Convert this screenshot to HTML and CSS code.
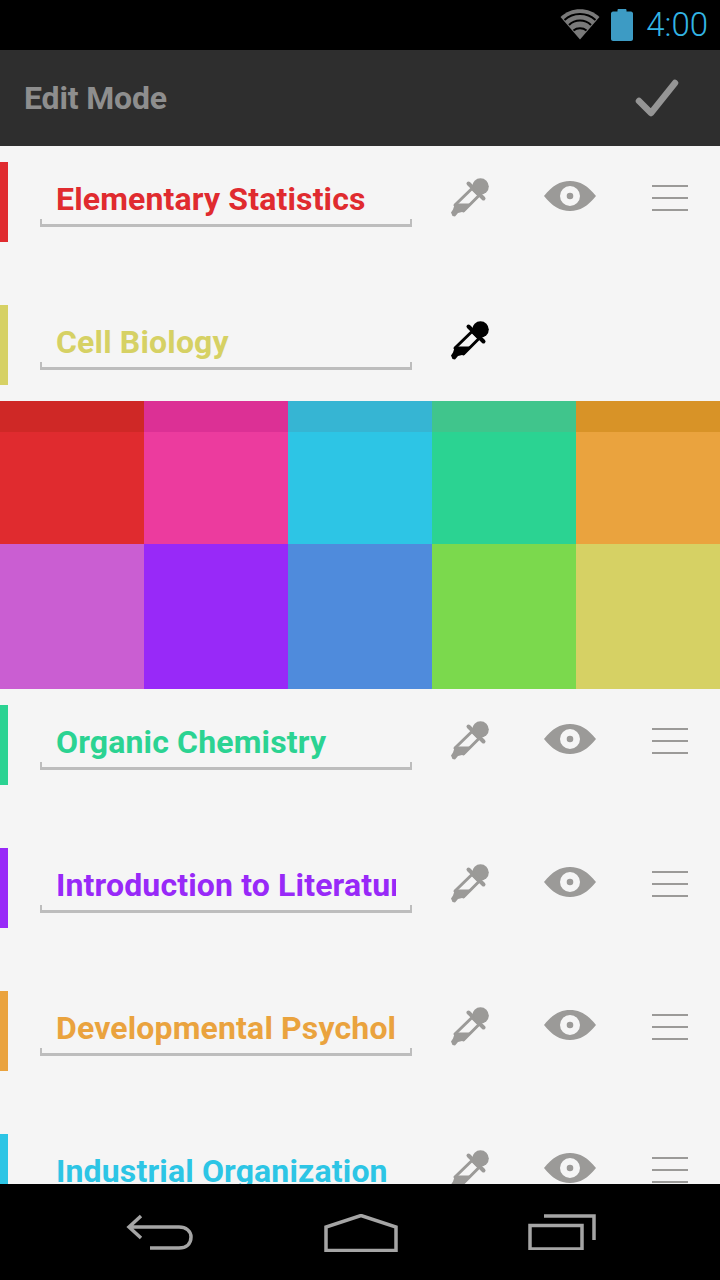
FILE: index.html
```html
<!DOCTYPE html>
<html lang="en">
<head>
<meta charset="utf-8">
<title>Edit Mode</title>
<link rel="stylesheet" href="styles.css">
</head>
<body>
<svg class="defs" width="0" height="0" aria-hidden="true">
  <symbol id="dropper" viewBox="0 0 40 40">
    <circle cx="30.500" cy="8.500" r="8.300" fill="currentColor"/>
    <path d="M18.500 5.500 L33.500 20.500" stroke="currentColor" stroke-width="4" stroke-linecap="round" fill="none"/>
    <path d="M22 10.500 L29 17.500 L13.500 33 L5 27 Z" fill="none" stroke="currentColor" stroke-width="3" stroke-linejoin="round"/>
    <path d="M5 25.500 L21 25.500 L14 33.500 L8 35 L5 38.500 L2.500 38 L1 34.500 L3 31.500 Z" fill="currentColor"/>
  </symbol>
  <symbol id="eye" viewBox="0 0 54 32">
    <path fill-rule="evenodd" fill="currentColor" d="M1 16 C9 6 17 1 27 1 C37 1 45 6 53 16 C45 26 37 31 27 31 C17 31 9 26 1 16 Z M27 6 A10 10 0 1 0 27 26 A10 10 0 1 0 27 6 Z M27 12.700 A3.300 3.300 0 1 1 27 19.300 A3.300 3.300 0 1 1 27 12.700 Z"/>
  </symbol>
  <symbol id="handle" viewBox="0 0 36 26">
    <path d="M0 1 H36 M0 13 H36 M0 25 H36" stroke="currentColor" stroke-width="2" fill="none"/>
  </symbol>
</svg>
<div class="screen">
  <header class="status">
    <svg class="wifi" viewBox="0 0 40 32"><path d="M0.500 9 C11 -1.500 29 -1.500 39.500 9 L20 31.500 Z" fill="#7a7a7a"/><path d="M4.500 12 C13 4 27 4 35.500 12 M9 17 C15 11 25 11 31 17 M13.500 22.500 C17 19.500 23 19.500 26.500 22.500" stroke="#000" stroke-width="2" fill="none"/></svg>
    <svg class="battery" viewBox="0 0 22 32"><path d="M6.500 1 C6.500 0.500 7 0 7.500 0 H14.500 C15 0 15.500 0.500 15.500 1 V2.500 H20 C21 2.500 22 3.500 22 4.500 V30 C22 31 21 32 20 32 H2 C1 32 0 31 0 30 V4.500 C0 3.500 1 2.500 2 2.500 H6.500 Z" fill="#3d9bc4"/></svg>
    <span class="clock">4:00</span>
  </header>
  <div class="actionbar">
    <span class="title">Edit Mode</span>
    <svg class="check" viewBox="0 0 44 38"><path d="M4 22 L16 34 L40 4" fill="none" stroke="#959595" stroke-width="6.500" stroke-linecap="round" stroke-linejoin="round"/></svg>
  </div>
  <main class="list">
    <div class="row">
      <span class="bar c-red"></span>
      <div class="field"><span class="name t-red">Elementary Statistics</span></div>
      <div class="icons">
        <svg class="ico drop"><use href="#dropper"/></svg>
        <svg class="ico eye"><use href="#eye"/></svg>
        <svg class="ico handle"><use href="#handle"/></svg>
      </div>
    </div>
    <div class="row row-open">
      <span class="bar c-yellow"></span>
      <div class="field"><span class="name t-yellow">Cell Biology</span></div>
      <div class="icons">
        <svg class="ico drop active"><use href="#dropper"/></svg>
      </div>
    </div>
    <div class="palette">
      <div class="swatch c-red top b-red"></div>
      <div class="swatch c-pink top b-pink"></div>
      <div class="swatch c-cyan top b-cyan"></div>
      <div class="swatch c-green top b-green"></div>
      <div class="swatch c-orange top b-orange"></div>
      <div class="swatch c-orchid"></div>
      <div class="swatch c-violet"></div>
      <div class="swatch c-blue"></div>
      <div class="swatch c-lime"></div>
      <div class="swatch c-yellow"></div>
    </div>
    <div class="row">
      <span class="bar c-green"></span>
      <div class="field"><span class="name t-green">Organic Chemistry</span></div>
      <div class="icons">
        <svg class="ico drop"><use href="#dropper"/></svg>
        <svg class="ico eye"><use href="#eye"/></svg>
        <svg class="ico handle"><use href="#handle"/></svg>
      </div>
    </div>
    <div class="row">
      <span class="bar c-violet"></span>
      <div class="field"><span class="name t-violet">Introduction to Literature</span></div>
      <div class="icons">
        <svg class="ico drop"><use href="#dropper"/></svg>
        <svg class="ico eye"><use href="#eye"/></svg>
        <svg class="ico handle"><use href="#handle"/></svg>
      </div>
    </div>
    <div class="row">
      <span class="bar c-orange"></span>
      <div class="field"><span class="name t-orange">Developmental Psychology</span></div>
      <div class="icons">
        <svg class="ico drop"><use href="#dropper"/></svg>
        <svg class="ico eye"><use href="#eye"/></svg>
        <svg class="ico handle"><use href="#handle"/></svg>
      </div>
    </div>
    <div class="row">
      <span class="bar c-cyan"></span>
      <div class="field"><span class="name t-cyan">Industrial Organization</span></div>
      <div class="icons">
        <svg class="ico drop"><use href="#dropper"/></svg>
        <svg class="ico eye"><use href="#eye"/></svg>
        <svg class="ico handle"><use href="#handle"/></svg>
      </div>
    </div>
  </main>
  <nav class="navbar">
    <svg class="nav-back" viewBox="0 0 68 36"><path d="M15 2 L3 13 L15 24 M3 13 H53 C60 13 65 17 65 23 C65 30 60 34 53 34 H24" fill="none" stroke="#a5a5a5" stroke-width="3.500"/></svg>
    <svg class="nav-home" viewBox="0 0 74 38"><path d="M2 36.500 V13 L37 1.500 L72 13 V36.500 Z" fill="none" stroke="#a5a5a5" stroke-width="3.500"/></svg>
    <svg class="nav-recent" viewBox="0 0 70 36"><path d="M17 2 H67 V26 M3 11.500 H55 V35 H3 Z" fill="none" stroke="#a5a5a5" stroke-width="3.500"/></svg>
  </nav>
</div>
</body>
</html>
```
FILE: styles.css
```css
* { box-sizing: border-box; }
html, body { margin: 0; padding: 0; background: #000; }
.defs { position: absolute; }
.screen {
  width: 720px;
  height: 1280px;
  display: flex;
  flex-direction: column;
  overflow: hidden;
  font-family: Roboto, "Liberation Sans", sans-serif;
}
.status {
  height: 50px;
  flex: none;
  background: #000;
  display: flex;
  align-items: center;
  justify-content: flex-end;
  padding-right: 12px;
}
.wifi { width: 40px; height: 32px; margin-right: 11px; margin-top: -2px; }
.battery { width: 22px; height: 32px; margin-right: 13px; margin-top: -1px; }
.clock { color: #33b5e5; font-size: 33px; font-weight: 300; line-height: 50px; }
.actionbar {
  height: 96px;
  flex: none;
  background: #2e2e2e;
  display: flex;
  align-items: center;
  justify-content: space-between;
  padding: 0 41px 0 24px;
}
.title { color: #8e8e8e; font-size: 32px; font-weight: 700; letter-spacing: -0.15px; }
.check { width: 44px; height: 38px; }
.list {
  flex: 1;
  min-height: 0;
  overflow: hidden;
  background: #f5f5f5;
}
.row {
  height: 143px;
  display: flex;
  align-items: flex-start;
  padding-top: 16px;
}
.row-open { height: 112px; }
.bar { width: 8px; height: 80px; flex: none; }
.field {
  width: 372px;
  height: 65px;
  margin-left: 32px;
  padding: 16px 16px 0;
  background:
    linear-gradient(#bdbdbd, #bdbdbd) left bottom / 100% 3px no-repeat,
    linear-gradient(#bdbdbd, #bdbdbd) left bottom / 2px 8px no-repeat,
    linear-gradient(#bdbdbd, #bdbdbd) right bottom / 2px 8px no-repeat;
}
.name {
  display: block;
  overflow: hidden;
  white-space: nowrap;
  font-size: 32px;
  font-weight: 700;
  line-height: 42px;
  letter-spacing: 0.15px;
}
.icons {
  width: 300px;
  display: flex;
  flex: none;
  height: 80px;
  margin-left: 8px;
}
.ico { flex: none; color: #9b9a98; }
.active { color: #000; }
.drop { width: 40px; height: 40px; margin: 16px 30px 0 30px; }
.eye { width: 54px; height: 32px; margin: 18px 23px 0 23px; }
.handle { width: 36px; height: 26px; margin: 23px 0 0 32px; }
.palette {
  display: grid;
  grid-template-columns: repeat(5, 144px);
  grid-template-rows: 143px 145px;
}
.top { border-top: 31px solid; }
.c-red { background: #e02b2f; }
.c-pink { background: #ec3b9e; }
.c-cyan { background: #2dc5e5; }
.c-green { background: #2bd392; }
.c-orange { background: #eaa33e; }
.c-orchid { background: #ca5ed2; }
.c-violet { background: #9829f8; }
.c-blue { background: #4f8bdc; }
.c-lime { background: #7bd94d; }
.c-yellow { background: #d6d164; }
.b-red { border-top-color: #cf2826; }
.b-pink { border-top-color: #dc3095; }
.b-cyan { border-top-color: #36b5d3; }
.b-green { border-top-color: #40c58c; }
.b-orange { border-top-color: #d89327; }
.t-red { color: #e02b2f; }
.t-cyan { color: #2dc5e5; }
.t-green { color: #2bd392; }
.t-orange { color: #eaa33e; }
.t-violet { color: #9829f8; }
.t-yellow { color: #d6d164; }
.navbar {
  height: 96px;
  flex: none;
  background: #000;
  display: grid;
  grid-template-columns: 68px 74px 70px;
  justify-content: space-between;
  padding: 30px 123px 0 126px;
  align-items: start;
}
.nav-back { width: 68px; height: 36px; }
.nav-home { width: 74px; height: 38px; }
.nav-recent { width: 70px; height: 36px; }
```
